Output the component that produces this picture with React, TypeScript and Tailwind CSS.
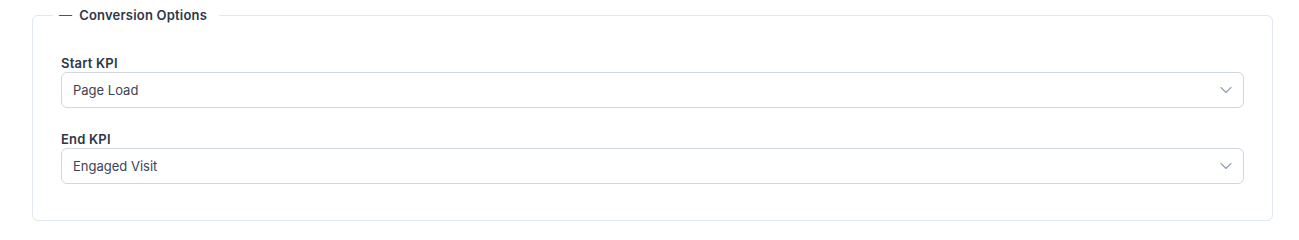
import { ChevronDown } from "lucide-react"

interface SelectFieldProps {
  label: string
  value: string
  options: string[]
}

function SelectField({ label, value, options }: SelectFieldProps) {
  return (
    <div className="flex flex-col">
      <label className="text-[13px] leading-[18px] font-semibold tracking-[0.015em] text-[#2d3748] mb-0">
        {label}
      </label>
      <div className="relative">
        <select
          defaultValue={value}
          className="w-full h-9 appearance-none rounded-md border border-[#cfd7e2] bg-white pl-[11px] pr-8 pt-[1px] text-[13px] text-[#3c4454] outline-none"
        >
          {options.map((opt) => (
            <option key={opt}>{opt}</option>
          ))}
        </select>
        <ChevronDown
          className="pointer-events-none absolute right-[8px] top-1/2 -translate-y-1/2 w-5 h-5 text-[#94a0b3]"
          strokeWidth={1.4}
        />
      </div>
    </div>
  )
}

const kpiOptions = ["Page Load", "Engaged Visit", "Add to Cart", "Checkout", "Purchase"]

export default function App() {
  return (
    <div className="w-[1299px] h-[240px] bg-white pt-[6px] font-['Inter',sans-serif]">
      <fieldset className="ml-8 w-[1241px] rounded-md border border-[#e1e7ee]">
        <legend className="ml-5 pl-1.5 pr-3">
          <span className="flex items-center gap-[7px] text-[13px] leading-[18px] font-semibold tracking-[0.015em] text-[#2d3748]">
            <span className="text-[#4a5263] font-normal">—</span>
            Conversion Options
          </span>
        </legend>

        <div className="px-7 pt-[30px] pb-9 flex flex-col gap-[22px]">
          <SelectField label="Start KPI" value="Page Load" options={kpiOptions} />
          <SelectField label="End KPI" value="Engaged Visit" options={kpiOptions} />
        </div>
      </fieldset>
    </div>
  )
}
